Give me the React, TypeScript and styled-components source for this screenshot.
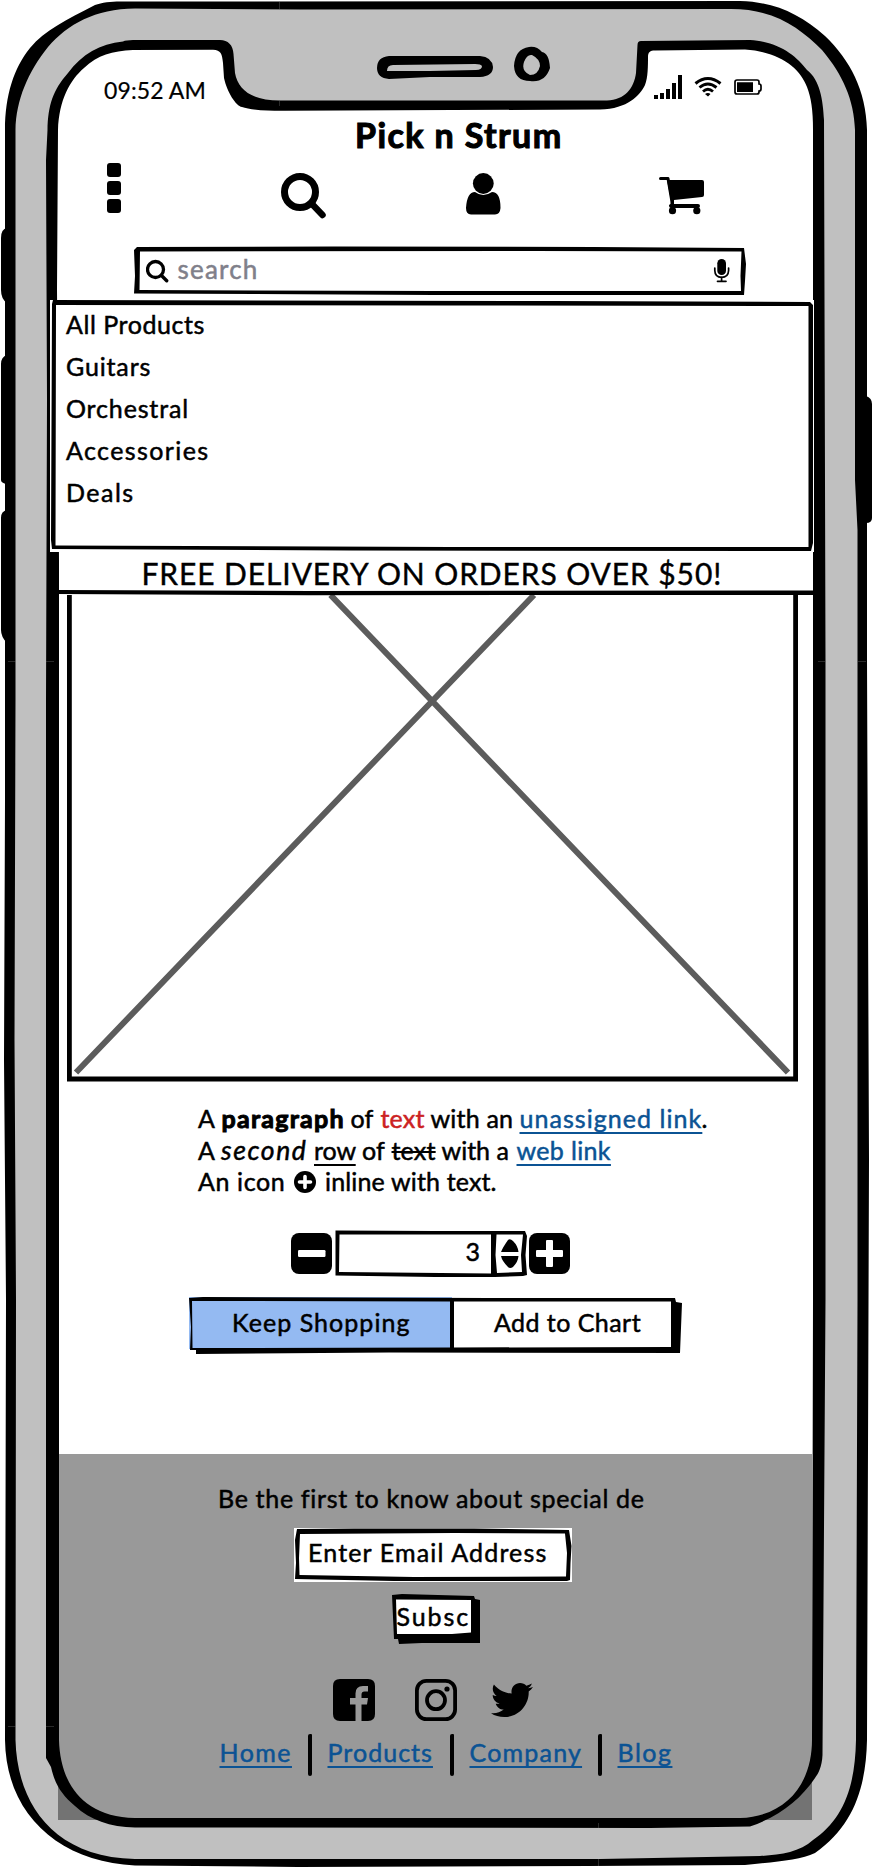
import React from "react";
import styled, { createGlobalStyle } from "styled-components";
import { FaTwitter } from "react-icons/fa";

const INK = "#000";
const LINK = "#0b5394";

const GlobalStyle = createGlobalStyle`
  * { box-sizing: border-box; }
  body { margin: 0; background: #fff; }
  svg { display: block; }
`;

const Phone = styled.div`
  position: relative;
  width: 872px;
  height: 1868px;
  overflow: hidden;
  background: #fff;
  color: ${INK};
  font-family: Lato, "Open Sans", sans-serif;
  font-size: 25px;
  white-space: pre;
  -webkit-text-stroke: 0.5px currentColor;
`;

const Backdrop = styled.svg`
  position: absolute;
  inset: 0;
`;

const Outline = styled.svg`
  position: absolute;
  top: 0;
  left: 0;
  overflow: visible;
  z-index: 0;
`;

const Screen = styled.main`
  position: relative;
  display: flex;
  flex-direction: column;
`;

const Tracked = styled.span<{ $track?: number }>`
  position: relative;
  letter-spacing: ${(p) => p.$track ?? 0}px;
`;

const StatusBar = styled.header`
  display: flex;
  align-items: flex-start;
  height: 112px;
  padding: 72px 110px 0 104px;
`;

const Clock = styled.time`
  flex: 1;
  font-size: 23px;
  line-height: 36px;
  letter-spacing: 0.1px;
  -webkit-text-stroke-width: 0.2px;
`;

const Title = styled.h1`
  margin: 0;
  height: 44px;
  padding-left: 355px;
  font-size: 34px;
  line-height: 46px;
  font-weight: 700;
  letter-spacing: 1.4px;
  -webkit-text-stroke-width: 1.1px;
`;

const Toolbar = styled.nav`
  display: grid;
  grid-template-columns: 190px 180px 198px 46px;
  height: 90px;
  padding: 4px 0 0 91px;
`;

const SearchBox = styled.div`
  position: relative;
  display: flex;
  align-items: center;
  width: 612px;
  height: 49px;
  margin-left: 134px;
  padding: 0 16px 0 11.5px;
`;

const SearchHint = styled.span`
  position: relative;
  flex: 1;
  margin: -4px 0 0 9px;
  color: #80808a;
  font-size: 26px;
  letter-spacing: 1.2px;
`;

const Icon = styled.svg`
  position: relative;
`;

const Menu = styled.ul`
  position: relative;
  width: 764px;
  height: 252px;
  margin: 5px 0 0 50px;
  padding: 3px 0 0 16px;
  list-style: none;
  background: #fff;
`;

const MenuItem = styled.li`
  position: relative;
  height: 42px;
  line-height: 42px;
`;

const Banner = styled.div`
  position: relative;
  width: 754px;
  height: 43px;
  margin-left: 59px;
  padding-left: 82.5px;
  background: #fff;
  font-size: 30px;
  line-height: 42px;
  -webkit-text-stroke-width: 0.4px;
`;

const Picture = styled.div`
  width: 731px;
  height: 487px;
  margin-left: 67px;
`;

const Copy = styled.div`
  height: 143px;
  padding: 21px 0 0 198px;
`;

const Line = styled.div`
  display: flex;
  align-items: baseline;
  height: 31.5px;
  line-height: 31.5px;
`;

const Word = styled.span<{ $w: number; $track?: number }>`
  width: ${(p) => p.$w}px;
  letter-spacing: ${(p) => p.$track ?? 0}px;

  strong {
    font-weight: 700;
    -webkit-text-stroke-width: 1px;
  }

  em {
    font-size: 26.5px;
    line-height: 1;
    font-style: italic;
  }
`;

const Underlined = styled.span`
  text-decoration: underline 2px;
  text-underline-offset: 4px;
  text-decoration-skip-ink: none;
`;

const Anchor = styled(Underlined).attrs({ as: "a" })`
  color: ${LINK};
`;

const Red = styled.span`
  color: #cc2222;
`;

const Struck = styled.s`
  text-decoration-thickness: 2px;
`;

const PlusDot = styled.svg`
  align-self: flex-start;
  margin: 5px 9px 0 0;
`;

const Stepper = styled.div`
  display: flex;
  align-items: center;
  height: 57px;
  padding-left: 291px;
`;

const StepField = styled.div`
  position: relative;
  width: 193px;
  height: 48px;
  margin: 1px 1px 0 3px;
  padding-right: 48px;
  line-height: 42px;
  text-align: right;
`;

const ButtonPair = styled.div`
  position: relative;
  display: flex;
  width: 492px;
  height: 58px;
  margin: 15px 0 0 189px;
`;

const Half = styled.button<{ $fill: string; $w: number; $pad: number; $track: number }>`
  width: ${(p) => p.$w}px;
  height: 52px;
  padding: 0 0 2px ${(p) => p.$pad}px;
  border: 0;
  background: ${(p) => p.$fill};
  color: inherit;
  font: inherit;
  text-align: left;
  white-space: pre;
  letter-spacing: ${(p) => p.$track}px;
  -webkit-text-stroke: inherit;
`;

const Footer = styled.footer`
  height: 365.5px;
  width: 754px;
  margin: 99px 0 0 58px;
  background: rgba(0, 0, 0, 0.4);
`;

const Invite = styled.p`
  margin: 0;
  height: 74px;
  padding: 28px 0 0 160px;
  line-height: 32px;
  letter-spacing: 0.68px;
`;

const EmailField = styled.div`
  position: relative;
  width: 278px;
  height: 54px;
  margin-left: 236px;
  padding-left: 14px;
  background: #fff;
  line-height: 48px;
`;

const Subscribe = styled.button`
  position: relative;
  display: block;
  width: 88px;
  height: 50px;
  margin: 12px 0 0 334px;
  padding: 0 0 6px 4.5px;
  border: 0;
  background: none;
  color: inherit;
  font: inherit;
  line-height: 42px;
  text-align: left;
  -webkit-text-stroke: inherit;
`;

const Social = styled.div`
  display: flex;
  height: 55px;
  margin-top: 35px;
  padding-left: 275px;
  gap: 40px;
`;

const Bird = styled(FaTwitter)`
  width: 42px;
  height: 42px;
  margin-left: -6.5px;
`;

const FooterNav = styled.nav`
  display: flex;
  padding-left: 161.5px;
  height: 42px;
`;

const FooterCell = styled.span<{ $w: number; $track: number }>`
  width: ${(p) => p.$w}px;
  line-height: 36px;
  letter-spacing: ${(p) => p.$track}px;
`;

const Bar = styled.i<{ $gap: number }>`
  width: 4px;
  height: 42px;
  margin-right: ${(p) => p.$gap}px;
  border-radius: 2px 1px 2px 2px;
  background: ${INK};
`;

const DeviceArt = () => (
  <Backdrop width="872" height="1868" viewBox="0 0 872 1868">
    <path d="M7 228Q1 229 1 238V290Q1 299 7 303ZM7 355Q1 357 1 364V480Q1 483 7 484ZM7 510Q1 511 1 518V630Q1 637 7 643ZM866 396Q872 398 872 404V518Q872 523 866 523Z" />
    <path d="M5 130C5 95 14 68 30 48C45 30 66 20 95 5C103 2 115 1 125 1.5L740 1C775 2 800 14 825 36C850 60 866 90 867 130L867 660L869 1160L867 1740C866 1785 855 1825 815 1853C800 1860 775 1862 745 1865L590 1866L298 1867L135 1865.5C60 1862 6 1815 5 1740L6 1300L4 1060L5 800Z" />
    <path fill="#c0c0c0" d="M15.5 130C16 100 28 72 48 47C68 24 95 9 135 8.5L300 9.5L731 9C775 9 800 28 822 50C843 75 854 100 855 130L855 480L857.5 530V1300L856 1740C855 1790 842 1820 813 1840C800 1852 780 1855 760 1856L600 1859H135C50 1857 17 1800 15.5 1740L16 1300L14.5 1040L15.5 700Z" />
    <path d="M47.5 130C48 105 53 90 68 73C82 54 100 44 123 41.5Q126 40 133 40L220 40C228 40 233 45 233.5 54L235 73C238 90 252 100.500 280 100.5L607 100.5C625 100 634 88 636 73L637.500 45Q637.500 41 641 41L750 40C780 42 796 56 807 70C820 80 823 100 824 120L825.500 660V1300L822.500 1755C822 1767 818 1774 815 1778C800 1800 780 1816 750 1826.5L650 1828L135 1827.5C110 1827 90 1820 75 1806C62 1795 55 1785 51 1767L46 1758V700L47 400L46 160Z" />
    <path fill="#fff" d="M58 130C59 100 70 80 84 68C98 55 112 51 133 50L213 49.800C221 50 222 54 223 63L224 78C227 92 236 106 242 107C250 110 270 111 285 110.800L600 109.500C628 109 640 95 645 85C648 78 648 65 648 57C648 52 650 50.5 655 50.5L745 49.5C780 52 800 68 807 87C811 97 813 110 813 130V1300L812 1740C812 1780 790 1816 740 1818H135C80 1817 60 1780 59 1740V560L57 290Z" />
    <path fillRule="evenodd" d="M389 56H480Q492 57 493 67Q493 76 480 77L430 77L389 79Q377 78 377 68Q377 57 389 56ZM393 65Q387 65 387 71H430L476 70Q482 70 482 66Q481 64 475 64ZM529 47Q515 49 514 66Q515 81 530 81Q545 83 550 68Q549 53 542 52Q537 46 529 47ZM532 55Q540 59 540 66Q538 75 530 75Q521 71 524 62Q527 54 532 55Z" />
    <path fill="none" stroke="#777" strokeWidth=".35" d="M279.500 1V9M279.500 101V106M8 661.500H16M46 661.500H54M818 661.500H825M858 661.500H866M8 1726.500H16M46 1726.500H54M598.500 1823V1828M598.500 1859V1866" />
  </Backdrop>
);

const StatusIcons = () => (
  <Icon width="110" height="28" viewBox="652 72 110 28">
    <path d="M654 95h4v4h-4zM660 93h4v6h-4zM666 89h4v10h-4zM672 83h4v16h-4zM678 75h4v24h-4z" />
    <g fill="none" stroke="#000" strokeWidth="3">
      <path d="M695.500 83.500Q707.800 73.500 720.500 83.500" />
      <path d="M699.500 87.500Q707.800 80.500 716.500 87.500" strokeWidth="2.900" />
      <path d="M703 91.500Q707.800 87 713 91.500" strokeWidth="2.800" />
      <path d="M735 82Q735 80 737 80H757Q759 80 759 82V84Q761 84 761 86V89Q761 91 759 91V92Q759 94 757 94H737Q735 94 735 92Z" strokeWidth="1.700" />
    </g>
    <path d="M705 94Q708 92 710.500 94L708 96.500ZM737 82.300H753V92H737Z" />
  </Icon>
);

const Kebab = () => (
  <Icon width="46" height="60" viewBox="91 160 46 60">
    <rect x="107" y="163" width="14" height="14" rx="3" />
    <rect x="107" y="181" width="14" height="14" rx="3" />
    <rect x="107" y="199" width="14" height="14" rx="3" />
  </Icon>
);

const BigSearch = () => (
  <Icon width="46" height="60" viewBox="281 160 46 60" fill="none" stroke="#000">
    <circle cx="300" cy="192" r="15.500" strokeWidth="7" />
    <path d="M311.500 203.500L322.500 215" strokeWidth="6.500" strokeLinecap="round" />
  </Icon>
);

const Person = () => (
  <Icon width="46" height="60" viewBox="461 160 46 60">
    <circle cx="483.300" cy="183.500" r="10.400" />
    <path d="M475 192Q483 198 492 192Q500.500 192 500.500 208Q500 214.500 495 214.500H471Q466 214 466 208Q467 192 475 192Z" />
  </Icon>
);

const Cart = () => (
  <Icon width="46" height="60" viewBox="659 160 46 60">
    <path d="M667 180H702Q704 180 704 182V195Q704 197 702 197L674 200V204H698Q700 204 700 206Q700 208 698 208H671Q669 208 669 205Q671 204 671 201L667 180Z" />
    <path d="M660.500 178.500H668L672 202" fill="none" stroke="#000" strokeWidth="3" strokeLinecap="round" strokeLinejoin="round" />
    <circle cx="672.500" cy="210.700" r="3.600" />
    <circle cx="696.800" cy="210.700" r="3.600" />
  </Icon>
);

const MiniSearch = () => (
  <Icon width="23" height="24" viewBox="146 260 23 24" fill="none" stroke="#000">
    <circle cx="155.500" cy="270.500" r="8" strokeWidth="3.300" />
    <path d="M161.500 276.500L166.700 281.700" strokeWidth="3.400" strokeLinecap="round" />
  </Icon>
);

const Mic = () => (
  <Icon width="17" height="24" viewBox="713 259 17 24">
    <rect x="717.300" y="259" width="8.700" height="16" rx="4.300" />
    <path d="M714.800 268V270.500Q715 277.300 721.600 277.300Q728.300 277.300 728.600 270.500V268M721.600 277V281M717.500 281.300H726" fill="none" stroke="#000" strokeWidth="1.700" strokeLinecap="round" />
  </Icon>
);

const Facebook = () => (
  <Icon width="42" height="42" viewBox="0 0 42 42">
    <path d="M7 0H35Q42 0 42 7V35Q42 42 35 42H28.500V25.500H34L35 19H28.500V15.500Q28.500 12.500 31.500 12.500H35V7H30Q22.500 7 22.500 14.500V19H17V25.500H22.500V42H7Q0 42 0 35V7Q0 0 7 0Z" />
  </Icon>
);

const Instagram = () => (
  <Icon width="42" height="42" viewBox="0 0 42 42" fill="none" stroke="#000" strokeWidth="3.800">
    <rect x="1.900" y="1.900" width="38.200" height="38.200" rx="9.500" />
    <circle cx="21" cy="21.200" r="9" />
    <circle cx="32" cy="10" r="2.600" fill="#000" stroke="none" />
  </Icon>
);

const menu: [string, number][] = [
  ["All Products", 0.55],
  ["Guitars", 0.85],
  ["Orchestral", 0.85],
  ["Accessories", 1.4],
  ["Deals", 1.5],
];

export default function App() {
  return (
    <Phone>
      <GlobalStyle />
      <DeviceArt />
      <Screen>
        <StatusBar>
          <Clock>09:52 AM</Clock>
          <StatusIcons />
        </StatusBar>
        <Title>Pick n Strum</Title>
        <Toolbar>
          <Kebab />
          <BigSearch />
          <Person />
          <Cart />
        </Toolbar>

        <SearchBox>
          <Outline width="612" height="49" viewBox="0 0 612 49">
            <path fillRule="evenodd" d="M3 1L200 .5L460 1L610 2L612 18L611 35L610 49L300 49L0 47.500L1 30L0 4ZM6 5.500L5.500 44L300 45H607L606.500 30L607.500 5.500L400 5Z" />
          </Outline>
          <MiniSearch />
          <SearchHint>search</SearchHint>
          <Mic />
        </SearchBox>

        <Menu>
          <Outline width="764" height="252" viewBox="0 0 764 252">
            <path fillRule="evenodd" d="M3 0L500 1L760 2L763 5V243L761 251L300 250.500L2 249L1 240L2 4ZM6 5L5.500 245.500L400 247H758.500V6L400 5.500Z" />
          </Outline>
          {menu.map(([label, track]) => (
            <MenuItem key={label}>
              <Tracked $track={track}>{label}</Tracked>
            </MenuItem>
          ))}
        </Menu>

        <Banner>
          <Outline width="754" height="43" viewBox="0 0 754 43">
            <path d="M-3 39L0 38L250 39L754 38.500V43L250 43.200L-3 42Z" />
          </Outline>
          <Tracked $track={0.9}>FREE DELIVERY ON ORDERS OVER $50!</Tracked>
        </Banner>

        <Picture>
          <svg width="731" height="487" viewBox="0 0 731 487">
            <path d="M9 477.500L467 0M721 477.500L263.500 0" stroke="#5c5c5c" strokeWidth="6" />
            <path d="M2.400 0V484H728.600V0" fill="none" stroke="#000" strokeWidth="4.800" />
          </svg>
        </Picture>

        <Copy>
          <Line>
            <Word $w={23.5}>A </Word>
            <Word $w={129} $track={1.25}><strong>paragraph</strong> </Word>
            <Word $w={30}>of </Word>
            <Word $w={50} $track={0.2}><Red>text</Red> </Word>
            <Word $w={89} $track={0.2}>with an </Word>
            <Word $w={182} $track={1.05}><Anchor>unassigned link</Anchor></Word>
            <Word $w={6}>.</Word>
          </Line>
          <Line>
            <Word $w={23}>A </Word>
            <Word $w={93} $track={1.6}><em>second</em> </Word>
            <Word $w={48}><Underlined>row</Underlined> </Word>
            <Word $w={29.5}>of </Word>
            <Word $w={50} $track={0.2}><Struck>text</Struck> </Word>
            <Word $w={75}>with a </Word>
            <Word $w={100} $track={0.35}><Anchor>web link</Anchor></Word>
          </Line>
          <Line>
            <Word $w={96} $track={0.6}>An icon </Word>
            <PlusDot width="22" height="22" viewBox="0 0 22 22">
              <circle cx="11" cy="11" r="11" />
              <path d="M11 5.500V16.500M5.500 11H16.500" stroke="#fff" strokeWidth="3.600" strokeLinecap="round" />
            </PlusDot>
            <Word $w={180} $track={0.15}>inline with text.</Word>
          </Line>
        </Copy>

        <Stepper>
          <Icon width="41" height="41" viewBox="0 0 41 41">
            <rect width="41" height="41" rx="8" />
            <rect x="7" y="17" width="27.500" height="7" rx="1.200" fill="#fff" />
          </Icon>
          <StepField>
            <Outline width="193" height="48" viewBox="0 0 193 48">
              <path fillRule="evenodd" d="M.5 .5L100 1L190 1L192 6L190.500 25L192 45L188 46L160 47L100 47L.5 45.500ZM4.500 4.500L4 42L156 43.500V4.500ZM161.500 4.500L160.500 25L162 43L187 42L186 25L188 4.500Z" />
              <path d="M166 22Q168 17 173 10Q175 8 178 11Q183 16 183.500 22ZM166 26H183.500Q183 32 178 37Q175 39 173 37Q167 31 166 26Z" />
            </Outline>
            <Tracked>3</Tracked>
          </StepField>
          <Icon width="41" height="41" viewBox="0 0 41 41">
            <rect width="41" height="41" rx="8" />
            <path d="M17 8Q17 7 18 7H23Q24 7 24 8V17H33Q34 17 34 18V23Q34 24 33 24H24V33Q24 34 23 34H18Q17 34 17 33V24H8Q7 24 7 23V18Q7 17 8 17H17Z" fill="#fff" />
          </Icon>
        </Stepper>

        <ButtonPair>
          <Half $fill="#94baf2" $w={263} $pad={43} $track={1.05}>Keep Shopping</Half>
          <Half $fill="#fff" $w={222} $pad={42} $track={0.45}>Add to Chart</Half>
          <Outline width="492" height="58" viewBox="0 0 492 58">
            <path fillRule="evenodd" d="M0 1L14 0L300 1L486 1L487 5L493 6L491 56L200 55.500L7 57V53L1 53L2 30ZM3 4L3.500 51L261 50.500V4.500ZM265 4.500V50.500L482 50V4.500Z" />
          </Outline>
        </ButtonPair>

        <Footer>
          <Invite>Be the first to know about special de</Invite>
          <EmailField>
            <Outline width="278" height="54" viewBox="0 0 278 54">
              <path fillRule="evenodd" d="M3 1L60 .5L180 .5L275 2L277.500 18L276.500 35L276 52L273 53L100 53L1 51L2 35L1 12ZM6 6L5 30L5.500 47L120 49L272 48.500L273 25L271 5.500L160 5Z" />
            </Outline>
            <Tracked $track={1.15}>Enter Email Address</Tracked>
          </EmailField>
          <Subscribe>
            <Outline width="88" height="50" viewBox="0 0 88 50">
              <path d="M0 1L10 0L82 2L83 5L88 6V49L30 49L7 50L6 45L2 45Z" />
              <path fill="#fff" d="M4 5.500L79 6V38.500L60 40H5Z" />
            </Outline>
            <Tracked $track={1.9}>Subsc</Tracked>
          </Subscribe>
          <Social>
            <Facebook />
            <Instagram />
            <Bird />
          </Social>
          <FooterNav>
            <FooterCell $w={88.5} $track={1.45}><Anchor>Home</Anchor></FooterCell>
            <Bar $gap={15.5} />
            <FooterCell $w={122.5} $track={1.03}><Anchor>Products</Anchor></FooterCell>
            <Bar $gap={15.5} />
            <FooterCell $w={128.5} $track={1.2}><Anchor>Company</Anchor></FooterCell>
            <Bar $gap={15.5} />
            <FooterCell $w={60} $track={1.5}><Anchor>Blog</Anchor></FooterCell>
          </FooterNav>
        </Footer>
      </Screen>
    </Phone>
  );
}
